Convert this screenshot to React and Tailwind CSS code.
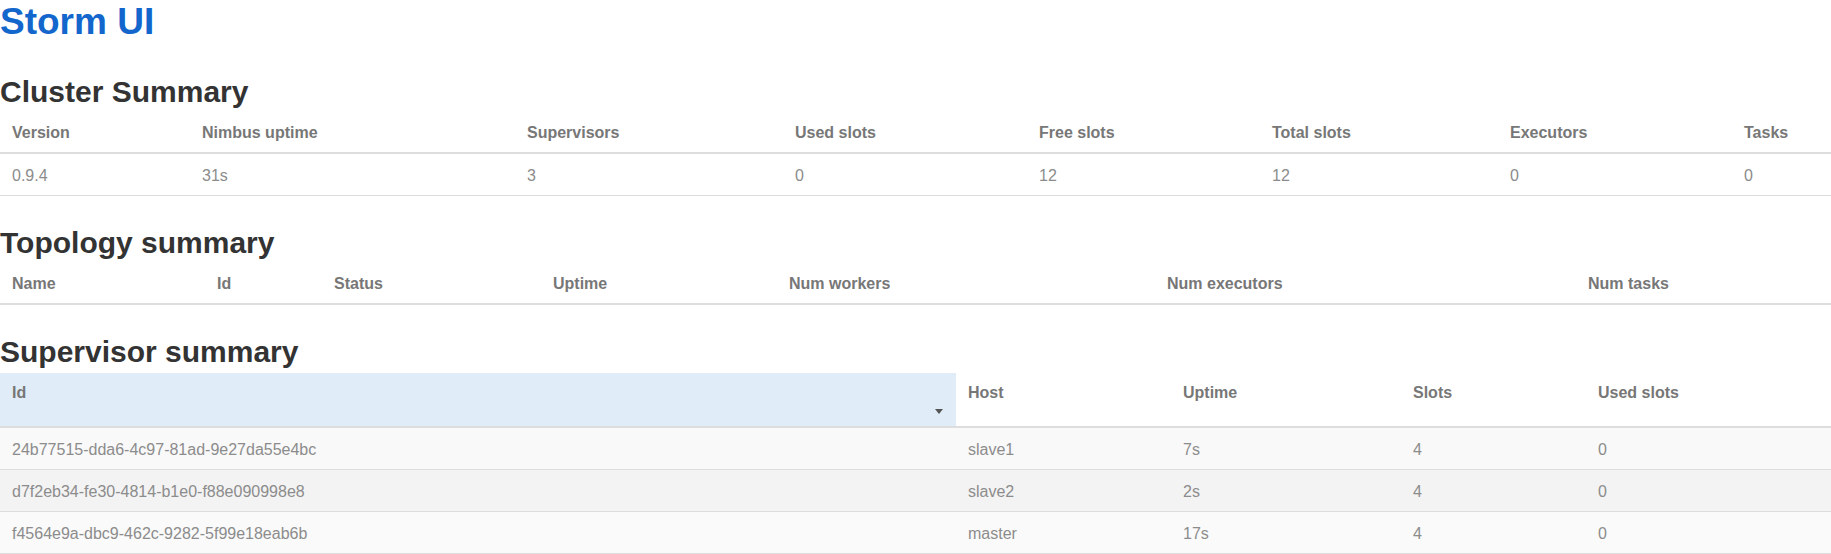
import React from "react";

const cluster = {
    widths: [190, 325, 268, 244, 233, 238, 234, 99],
    headers: ["Version", "Nimbus uptime", "Supervisors", "Used slots", "Free slots", "Total slots", "Executors", "Tasks"],
    rows: [["0.9.4", "31s", "3", "0", "12", "12", "0", "0"]],
};

const topology = {
    widths: [205, 117, 219, 236, 378, 421, 255],
    headers: ["Name", "Id", "Status", "Uptime", "Num workers", "Num executors", "Num tasks"],
    rows: [],
};

const supervisors = {
    widths: [956, 215, 230, 185, 245],
    headers: ["Id", "Host", "Uptime", "Slots", "Used slots"],
    rows: [
        ["24b77515-dda6-4c97-81ad-9e27da55e4bc", "slave1", "7s", "4", "0"],
        ["d7f2eb34-fe30-4814-b1e0-f88e090998e8", "slave2", "2s", "4", "0"],
        ["f4564e9a-dbc9-462c-9282-5f99e18eab6b", "master", "17s", "4", "0"],
    ],
};

function Heading({ children }) {
    return (
        <h2 className="mt-[30px] mb-[5px] text-[30px] leading-[33px] font-bold text-[#333]">
            {children}
        </h2>
    );
}

function SimpleTable({ data }) {
    return (
        <table className="w-full table-fixed border-collapse">
            <colgroup>
                {data.widths.map((w, i) => (
                    <col key={i} style={{ width: w }} />
                ))}
            </colgroup>
            <thead>
                <tr>
                    {data.headers.map((h) => (
                        <th
                            key={h}
                            className="px-3 pt-[9px] pb-[8px] text-left align-top leading-[22px] font-bold text-[#777] border-b-2 border-[#ddd]"
                        >
                            {h}
                        </th>
                    ))}
                </tr>
            </thead>
            <tbody>
                {data.rows.map((row, r) => (
                    <tr key={r}>
                        {row.map((c, i) => (
                            <td key={i} className="px-3 pt-[11px] pb-[9px] leading-[21px] text-[#8c8c8c] border-b border-[#ddd]">
                                {c}
                            </td>
                        ))}
                    </tr>
                ))}
            </tbody>
        </table>
    );
}

function SupervisorTable({ data }) {
    const stripes = ["bg-[#f9f9f9]", "bg-[#f3f3f3]", "bg-[#fafafa]"];
    return (
        <table className="w-full table-fixed border-collapse">
            <colgroup>
                {data.widths.map((w, i) => (
                    <col key={i} style={{ width: w }} />
                ))}
            </colgroup>
            <thead>
                <tr>
                    {data.headers.map((h, i) => (
                        <th
                            key={h}
                            className={
                                "relative px-3 pt-[9px] pb-[22px] text-left align-top leading-[22px] font-bold text-[#777] border-b-2 border-[#ddd] " +
                                (i === 0 ? "bg-[#e0ecf7]" : "bg-white")
                            }
                        >
                            {h}
                            {i === 0 && (
                                <svg className="absolute right-[13px] bottom-[12px]" width="8" height="5" viewBox="0 0 8 5">
                                    <polygon points="0,0 8,0 4,5" fill="#555" />
                                </svg>
                            )}
                        </th>
                    ))}
                </tr>
            </thead>
            <tbody>
                {data.rows.map((row, r) => (
                    <tr key={r} className={stripes[r]}>
                        {row.map((c, i) => (
                            <td key={i} className="px-3 pt-[11px] pb-[9px] leading-[21px] text-[#8c8c8c] border-b border-[#ddd]">
                                {c}
                            </td>
                        ))}
                    </tr>
                ))}
            </tbody>
        </table>
    );
}

export default function App() {
    return (
        <div className="min-h-screen bg-white font-['Liberation_Sans',Arial,sans-serif] text-[16px]">
            <h1 className="pt-[2px] text-[37px] leading-[40px] font-bold text-[#1266cc]">Storm UI</h1>

            <h2 className="mt-[33px] mb-[5px] text-[30px] leading-[33px] font-bold text-[#333]">
                Cluster Summary
            </h2>
            <SimpleTable data={cluster} />

            <Heading>Topology summary</Heading>
            <SimpleTable data={topology} />

            <Heading>Supervisor summary</Heading>
            <SupervisorTable data={supervisors} />
        </div>
    );
}
